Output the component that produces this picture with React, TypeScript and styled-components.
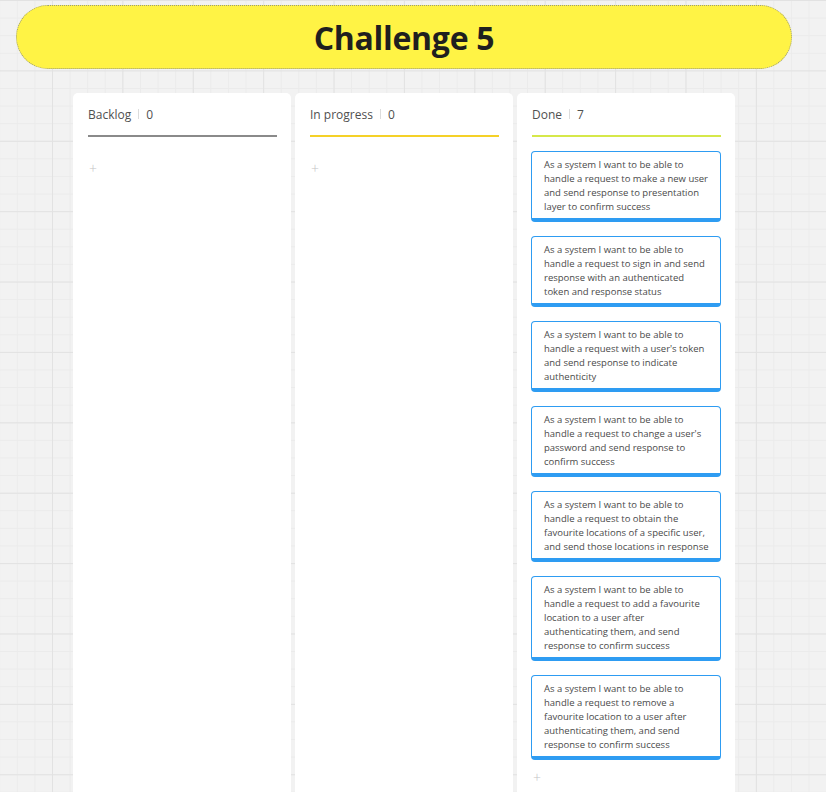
import React from "react";
import styled, { createGlobalStyle } from "styled-components";

const Global = createGlobalStyle`
  html, body {
    margin: 0;
    padding: 0;
    height: 792px;
    overflow: hidden;
  }
  body {
    font-family: "Open Sans", "Noto Sans", sans-serif;
    background-color: #f2f2f2;
    background-image:
      linear-gradient(#e2e2e2 1px, transparent 1px),
      linear-gradient(90deg, #e2e2e2 1px, transparent 1px),
      linear-gradient(#ebebeb 1px, transparent 1px),
      linear-gradient(90deg, #ebebeb 1px, transparent 1px);
    background-size: 70.4px 70.4px, 70.4px 70.4px, 17.6px 17.6px, 17.6px 17.6px;
    background-position: 0 0, 52px 0, 0 0, 16.8px 0;
  }
`;

const Page = styled.div`
  height: 792px;
  overflow: hidden;
  padding-top: 5px;
  box-sizing: border-box;
`;

const Banner = styled.div`
  margin-left: 16px;
  width: 776px;
  height: 64px;
  box-sizing: border-box;
  border-radius: 32px;
  background: #fff345;
  border: 1px dotted #9a9a7a;
  display: flex;
  align-items: center;
  justify-content: center;
`;

const Title = styled.h1`
  margin: 0;
  font-family: "Open Sans", sans-serif;
  font-weight: 700;
  font-size: 32px;
  color: #1f1f1f;
  letter-spacing: -0.3px;
`;

const Board = styled.div`
  display: flex;
  gap: 4px;
  margin-top: 24px;
  margin-left: 73px;
`;

const Column = styled.section`
  width: 218px;
  min-height: 720px;
  background: #fff;
  border-radius: 5px;
  padding: 13px 14px 0 15px;
  box-sizing: border-box;
`;

const Header = styled.div<{ $accent: string }>`
  display: flex;
  align-items: center;
  height: 16px;
  font-size: 12px;
  color: #505050;
  padding-bottom: 13px;
  border-bottom: 2px solid ${(p) => p.$accent};
`;

const Sep = styled.span`
  display: inline-block;
  width: 1px;
  height: 10px;
  background: #dcdcdc;
  margin: 0 7px 0 7px;
`;

const Cards = styled.div`
  display: flex;
  flex-direction: column;
  gap: 14px;
  margin-top: 14px;
`;

const Card = styled.div`
  width: 190px;
  margin-left: -1px;
  box-sizing: border-box;
  border: 1px solid #2e9cf2;
  border-bottom: 4px solid #2e9cf2;
  border-radius: 4px;
  padding: 6px 4px 4px 12px;
  font-size: 9.5px;
  line-height: 14px;
  color: #4a4a4a;
  white-space: nowrap;
`;

const Line = styled.div``;

const Add = styled.div`
  margin-top: 9px;
  height: 10px;
  padding-top: 4px;
  display: flex;
  align-items: center;
  margin-left: 1px;
  color: #c4c4c4;
  font-size: 14px;
  font-weight: 300;
  line-height: 10px;
`;

type Col = { name: string; accent: string; cards: string[][] };

const columns: Col[] = [
  { name: "Backlog", accent: "#8a8a8a", cards: [] },
  { name: "In progress", accent: "#f5d128", cards: [] },
  {
    name: "Done",
    accent: "#d6e84a",
    cards: [
      [
        "As a system I want to be able to",
        "handle a request to make a new user",
        "and send response to presentation",
        "layer to confirm success",
      ],
      [
        "As a system I want to be able to",
        "handle a request to sign in and send",
        "response with an authenticated",
        "token and response status",
      ],
      [
        "As a system I want to be able to",
        "handle a request with a user's token",
        "and send response to indicate",
        "authenticity",
      ],
      [
        "As a system I want to be able to",
        "handle a request to change a user's",
        "password and send response to",
        "confirm success",
      ],
      [
        "As a system I want to be able to",
        "handle a request to obtain the",
        "favourite locations of a specific user,",
        "and send those locations in response",
      ],
      [
        "As a system I want to be able to",
        "handle a request to add a favourite",
        "location to a user after",
        "authenticating them, and send",
        "response to confirm success",
      ],
      [
        "As a system I want to be able to",
        "handle a request to remove a",
        "favourite location to a user after",
        "authenticating them, and send",
        "response to confirm success",
      ],
    ],
  },
];

export default function App() {
  return (
    <>
      <Global />
      <Page>
        <Banner>
          <Title>Challenge 5</Title>
        </Banner>
        <Board>
          {columns.map((c) => (
            <Column key={c.name}>
              <Header $accent={c.accent}>
                <span>{c.name}</span>
                <Sep />
                <span>{c.cards.length}</span>
              </Header>
              <Cards>
                {c.cards.map((lines, i) => (
                  <Card key={i}>
                    {lines.map((l, j) => (
                      <Line key={j}>{l}</Line>
                    ))}
                  </Card>
                ))}
              </Cards>
              <Add>+</Add>
            </Column>
          ))}
        </Board>
      </Page>
    </>
  );
}
